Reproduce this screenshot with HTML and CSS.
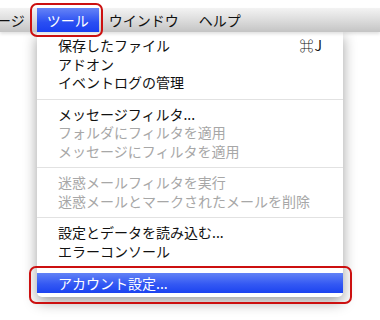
FILE: index.html
```html
<!DOCTYPE html>
<html lang="ja">
<head>
    <meta charset="UTF-8">
    <title>ツール メニュー</title>
    <link rel="stylesheet" href="styles.css">
</head>
<body>
    <!-- Menu bar -->
    <div class="menubar">
        <span class="menu-title first">メッセージ</span>
        <span class="menu-title active">ツール</span>
        <span class="menu-title">ウインドウ</span>
        <span class="menu-title">ヘルプ</span>
    </div>

    <!-- Tools dropdown -->
    <div class="dropdown">
        <div class="item"><span>保存したファイル</span><span class="shortcut">⌘J</span></div>
        <div class="item">アドオン</div>
        <div class="item">イベントログの管理</div>
        <div class="separator"></div>
        <div class="item">メッセージフィルタ...</div>
        <div class="item disabled">フォルダにフィルタを適用</div>
        <div class="item disabled">メッセージにフィルタを適用</div>
        <div class="separator"></div>
        <div class="item disabled">迷惑メールフィルタを実行</div>
        <div class="item disabled">迷惑メールとマークされたメールを削除</div>
        <div class="separator"></div>
        <div class="item">設定とデータを読み込む...</div>
        <div class="item">エラーコンソール</div>
        <div class="separator"></div>
        <div class="item selected">アカウント設定...</div>
    </div>

    <!-- Red callouts -->
    <div class="callout callout-menu"></div>
    <div class="callout callout-item"></div>
</body>
</html>
```

FILE: styles.css
```css
/* General */
body {
    margin: 0;
    width: 380px;
    height: 320px;
    overflow: hidden;
    position: relative;
    background: #ffffff;
    font-family: "Noto Sans CJK JP", "Noto Sans", sans-serif;
    font-size: 14px;
    color: #111;
}

/* Menu bar */
.menubar {
    margin-top: 8px;
    height: 24px;
    display: flex;
    align-items: stretch;
    background: linear-gradient(#f3f3f3, #dadada 55%, #c4c4c4);
    box-shadow: 0 2px 3px rgba(0, 0, 0, 0.12);
    position: relative;
    z-index: 2;
}

.menu-title {
    display: flex;
    align-items: center;
    padding: 0 10px;
    line-height: 24px;
    white-space: nowrap;
    flex-shrink: 0;
}

.menu-title.first {
    margin-left: -55px;
    padding-right: 12px;
}

.menu-title.active {
    color: #fff;
    background: linear-gradient(#6684f6, #2a4ff2 60%, #1a3ff0);
}

/* Dropdown */
.dropdown {
    margin-left: 37px;
    width: 306px;
    padding: 4px 0 4px;
    background: #fff;
    border-radius: 0 0 5px 5px;
    box-shadow: 0 5px 14px rgba(0, 0, 0, 0.38);
    position: relative;
    z-index: 1;
}

.item {
    display: flex;
    justify-content: space-between;
    align-items: center;
    height: 18.5px;
    padding: 0 20px 0 21px;
    white-space: nowrap;
}

.item.disabled {
    color: #a7a7a7;
}

.item.selected {
    height: 20px;
    color: #fff;
    background: linear-gradient(#6282f6, #3459f3 55%, #1c43f0);
}

.shortcut {
    letter-spacing: 1px;
}

.separator {
    height: 1px;
    margin: 7px 0 5px;
    background: #e2e2e2;
}

/* Red annotation frames */
.callout {
    position: absolute;
    border: 2px solid #cc1010;
    border-radius: 7px;
    z-index: 3;
}

.callout-menu {
    left: 30px;
    top: 3px;
    width: 69px;
    height: 30px;
}

.callout-item {
    left: 29px;
    top: 266px;
    width: 319px;
    height: 34px;
}
```
